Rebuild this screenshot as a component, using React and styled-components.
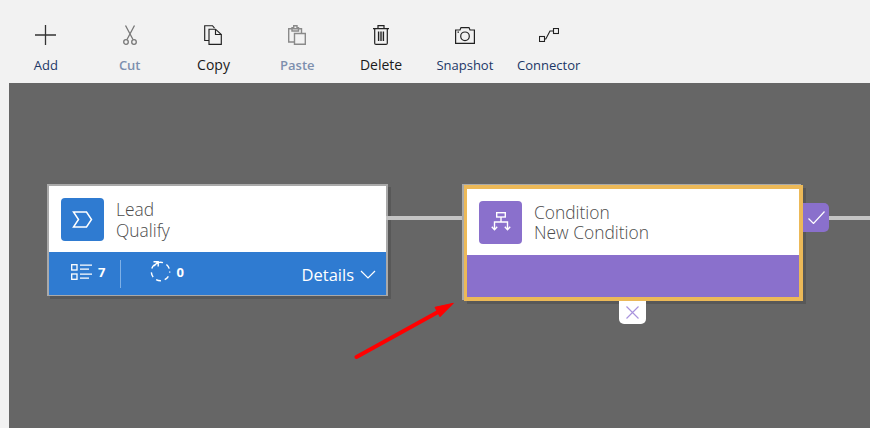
import React from "react";
import styled, { createGlobalStyle } from "styled-components";

const GlobalStyle = createGlobalStyle`
  html, body {
    margin: 0;
    padding: 0;
    width: 870px;
    height: 428px;
    overflow: hidden;
    background: #f2f2f2;
    font-family: "Open Sans", "Noto Sans", sans-serif;
  }
`;

const tools = [
  { label: "Add", tone: "link", icon: <AddIcon /> },
  { label: "Cut", tone: "off", icon: <CutIcon /> },
  { label: "Copy", tone: "plain", icon: <CopyIcon /> },
  { label: "Paste", tone: "off", icon: <PasteIcon /> },
  { label: "Delete", tone: "plain", icon: <DeleteIcon /> },
  { label: "Snapshot", tone: "link", icon: <SnapshotIcon /> },
  { label: "Connector", tone: "link", icon: <ConnectorIcon /> },
];

function AddIcon() {
  return (
    <svg width="21" height="20" viewBox="0 0 21 20" fill="none" stroke="#333" strokeWidth="1.3">
      <path d="M0 10H21M10.5 0V20" />
    </svg>
  );
}

function CutIcon() {
  return (
    <svg width="14" height="20" viewBox="0 0 14 20" fill="none" stroke="#777" strokeWidth="1.3">
      <path d="M2.5 0.5L10 14.5M11.5 0.5L4 14.5" />
      <circle cx="3" cy="17" r="2.3" />
      <circle cx="11" cy="17" r="2.3" />
    </svg>
  );
}

function CopyIcon() {
  return (
    <svg width="18" height="20" viewBox="0 0 18 20" fill="none" stroke="#222" strokeWidth="1.15">
      <path d="M5 15.5H0.7V0.7H8.5L10.5 3.2" />
      <path d="M5 4.2H11.5L17.3 9.5V19.3H5Z" />
      <path d="M11.5 4.2V9.5H17.3" />
    </svg>
  );
}

function PasteIcon() {
  return (
    <svg width="18" height="20" viewBox="0 0 18 20" fill="none" stroke="#8a8a8a" strokeWidth="1.4">
      <path d="M6 17H0.7V3.7H13.5V8" />
      <path d="M4 6V2.7H5.7V0.7H9V2.7H10.5V6Z" />
      <path d="M6.5 8.5H17.3V19.3H6.5Z" />
    </svg>
  );
}

function DeleteIcon() {
  return (
    <svg width="16" height="20" viewBox="0 0 16 20" fill="none" stroke="#222" strokeWidth="1.2">
      <path d="M0 3.6H16M5 3.6V0.7H11V3.6" />
      <path d="M1.7 3.6V18.2Q1.7 19.4 3 19.4H13Q14.3 19.4 14.3 18.2V3.6" />
      <path d="M5.6 6.5V16M8 6.5V16M10.4 6.5V16" strokeWidth="1.4" />
    </svg>
  );
}

function SnapshotIcon() {
  return (
    <svg width="20" height="17" viewBox="0 0 20 17" fill="none" stroke="#222" strokeWidth="1.2">
      <path d="M0.6 3H5L6 0.6H14L15 3H19.4V16.4H0.6Z" />
      <circle cx="10" cy="9.3" r="4.3" />
      <path d="M2.5 5.2H4" />
    </svg>
  );
}

function ConnectorIcon() {
  return (
    <svg width="20" height="14" viewBox="0 0 20 14" fill="none" stroke="#222" strokeWidth="1.1">
      <rect x="0.5" y="8.5" width="5" height="5" />
      <rect x="14.5" y="0.5" width="5" height="5" />
      <path d="M5.5 11H6.8L11 3H14.5" />
    </svg>
  );
}

function StageIcon() {
  return (
    <svg width="21" height="17" viewBox="0 0 21 17" fill="none" stroke="#fff" strokeWidth="1.5">
      <path d="M1.5 1H14.5L19.5 8.5L14.5 16H1.5L6.5 8.5Z" />
    </svg>
  );
}

function ConditionIcon() {
  return (
    <svg width="20" height="20" viewBox="0 0 20 20" fill="none" stroke="#fff" strokeWidth="1.4">
      <rect x="5.7" y="0.7" width="8.6" height="4.3" />
      <path d="M10 5V10M3.5 17.5V10H16.5V17.5" />
      <path d="M0.8 14.8L3.5 17.8L6.2 14.8M13.8 14.8L16.5 17.8L19.2 14.8" />
    </svg>
  );
}

function StepsIcon() {
  return (
    <svg width="22" height="16" viewBox="0 0 22 16" fill="none" stroke="#fff" strokeWidth="1.3">
      <rect x="0.7" y="0.7" width="5.3" height="5.3" />
      <rect x="0.7" y="10" width="5.3" height="5.3" />
      <path d="M9 1.2H21M9 5.2H18M9 10.2H21M9 14.2H18" />
    </svg>
  );
}

function CycleIcon() {
  return (
    <svg width="21" height="21" viewBox="0 0 21 21" fill="none" stroke="#fff" strokeWidth="1.4">
      <circle cx="10.5" cy="10.5" r="9.2" strokeDasharray="5 3.9" strokeDashoffset="-5" />
      <path d="M3.5 0.8H8.2V5.5M8.2 0.8L4 5" />
    </svg>
  );
}

function Chevron() {
  return (
    <svg width="16" height="9" viewBox="0 0 16 9" fill="none" stroke="#fff" strokeWidth="1.2">
      <path d="M1 1L8 8L15 1" />
    </svg>
  );
}

export default function App() {
  return (
    <Page>
      <GlobalStyle />
      <Toolbar>
        {tools.map((tool) => (
          <Tool key={tool.label}>
            <ToolIcon>{tool.icon}</ToolIcon>
            <ToolLabel $tone={tool.tone}>{tool.label}</ToolLabel>
          </Tool>
        ))}
      </Toolbar>
      <Canvas>
        <LeadNode>
          <NodeHead>
            <NodeBadge $bg="#2f7bd1">
              <StageIcon />
            </NodeBadge>
            <NodeTitle $leading={21} $drop={2}>
              <span>Lead</span>
              <span>Qualify</span>
            </NodeTitle>
          </NodeHead>
          <LeadFooter>
            <Stat>
              <StepsIcon />7
            </Stat>
            <StatDivider />
            <Stat>
              <CycleIcon />0
            </Stat>
            <Details>
              Details
              <Chevron />
            </Details>
          </LeadFooter>
        </LeadNode>
        <Link $left={377} $width={76} />
        <Link $left={820} $width={41} />
        <SelectedNode>
          <NodeHead>
            <NodeBadge $bg="#8a70cc">
              <ConditionIcon />
            </NodeBadge>
            <NodeTitle $leading={20} $drop={0}>
              <span>Condition</span>
              <span>New Condition</span>
            </NodeTitle>
          </NodeHead>
          <ConditionFooter />
          <CheckTab>
            <svg width="17" height="13" viewBox="0 0 17 13" fill="none" stroke="#fff" strokeWidth="1.2">
              <path d="M0.5 7.5L5.5 12.5L16.5 0.5" />
            </svg>
          </CheckTab>
          <CloseTab>
            <svg width="13" height="13" viewBox="0 0 13 13" fill="none" stroke="#a994dd" strokeWidth="1.2">
              <path d="M0.5 0.5L12.5 12.5M12.5 0.5L0.5 12.5" />
            </svg>
          </CloseTab>
        </SelectedNode>
        <Arrow width="110" height="70" viewBox="0 0 110 70">
          <path d="M2.5 64L84 19" stroke="#ff0000" strokeWidth="4" strokeLinecap="round" fill="none" />
          <path d="M99.3 10.3L81 14.3L86 23.7Z" fill="#ff0000" stroke="#ff0000" strokeWidth="1" />
        </Arrow>
      </Canvas>
    </Page>
  );
}

const Page = styled.div`
  display: flex;
  flex-direction: column;
  width: 870px;
  height: 428px;
  overflow: hidden;
  background: #f2f2f2;
`;

const Toolbar = styled.div`
  display: flex;
  flex: 0 0 83px;
  box-sizing: border-box;
  padding: 25px 0 0 4px;
`;

const Tool = styled.div`
  display: flex;
  flex-direction: column;
  align-items: center;
  width: 83.8px;
`;

const ToolIcon = styled.div`
  display: flex;
  align-items: center;
  justify-content: center;
  height: 20px;
`;

const ToolLabel = styled.div`
  margin-top: 11px;
  font-size: ${(p) => (p.$tone === "plain" ? "14px" : "13px")};
  line-height: 18px;
  white-space: nowrap;
  font-weight: ${(p) => (p.$tone === "off" ? 600 : 400)};
  color: ${(p) =>
    p.$tone === "off" ? "#7d8fae" : p.$tone === "link" ? "#1c3767" : "#1a1a1a"};
`;

const Canvas = styled.div`
  position: relative;
  flex: 1;
  margin-left: 9px;
  background: #666666;
`;

const Link = styled.div`
  position: absolute;
  left: ${(p) => p.$left}px;
  top: 133px;
  width: ${(p) => p.$width}px;
  height: 4px;
  background: #c4c4c4;
`;

const LeadNode = styled.div`
  position: absolute;
  left: 38px;
  top: 101px;
  display: flex;
  flex-direction: column;
  box-sizing: border-box;
  width: 341px;
  height: 112px;
  border: solid #a9a9a9;
  border-width: 2px 2px 1px 2px;
  box-shadow: 3px 3px 0 #585858;
`;

const NodeHead = styled.div`
  display: flex;
  flex: 0 0 66px;
  align-items: center;
  gap: 12px;
  padding-left: 12px;
  background: #ffffff;
`;

const NodeBadge = styled.div`
  display: flex;
  flex: 0 0 43px;
  align-items: center;
  justify-content: center;
  height: 43px;
  border-radius: 4px;
  background: ${(p) => p.$bg};
`;

const NodeTitle = styled.div`
  display: flex;
  flex-direction: column;
  margin-top: ${(p) => p.$drop}px;
  font-size: 17.4px;
  font-weight: 300;
  line-height: ${(p) => p.$leading}px;
  color: #4c4c4c;
`;

const LeadFooter = styled.div`
  display: flex;
  flex: 1;
  align-items: center;
  padding: 0 10px 0 22px;
  background: #2f7bd1;
  color: #ffffff;
`;

const Stat = styled.div`
  display: flex;
  align-items: center;
  gap: 5px;
  margin-bottom: 4px;
  font-size: 13px;
  font-weight: 700;
`;

const StatDivider = styled.div`
  width: 1px;
  height: 28px;
  margin: 0 29px 0 15px;
  background: #7fb0e6;
`;

const Details = styled.div`
  display: flex;
  align-items: center;
  gap: 6px;
  margin-left: auto;
  margin-top: 1px;
  font-size: 16.5px;
`;

const SelectedNode = styled.div`
  position: absolute;
  left: 455px;
  top: 102px;
  display: flex;
  flex-direction: column;
  box-sizing: border-box;
  width: 339px;
  height: 116px;
  border: solid #ecb958;
  border-width: 4px 4px 4px 3px;
  box-shadow: -2px -1px 0 #a9a9a9, 3px 3px 0 #585858;
`;

const ConditionFooter = styled.div`
  flex: 1;
  background: #8a70cc;
`;

const CheckTab = styled.div`
  position: absolute;
  left: 336px;
  top: 14px;
  display: flex;
  align-items: center;
  justify-content: center;
  width: 26px;
  height: 29px;
  border-radius: 0 5px 5px 0;
  background: #8a70cc;
`;

const CloseTab = styled.div`
  position: absolute;
  left: 152px;
  top: 112px;
  display: flex;
  align-items: center;
  justify-content: center;
  width: 27px;
  height: 23px;
  border-radius: 0 0 5px 5px;
  background: #ffffff;
`;

const Arrow = styled.svg`
  position: absolute;
  left: 345px;
  top: 210px;
`;
